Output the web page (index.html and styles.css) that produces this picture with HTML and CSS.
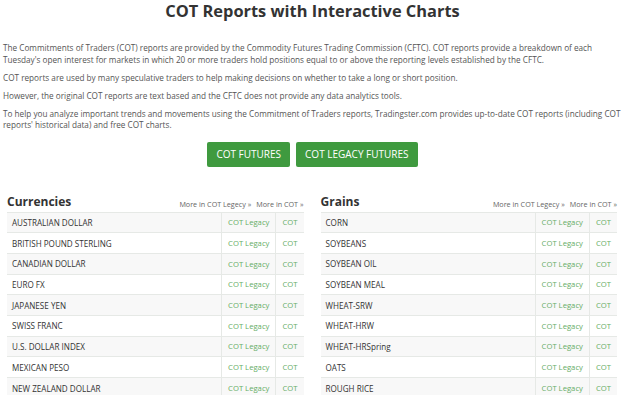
FILE: index.html
```html
<!DOCTYPE html>
<html lang="en">
	<head>
		<meta charset="UTF-8" />
		<meta name="viewport" content="width=device-width, initial-scale=1.0" />
		<title>COT Reports with Interactive Charts</title>
		<link rel="stylesheet" href="styles.css">
	</head>
	<body>
		<h1 class="title">COT Reports with Interactive Charts</h1>

		<div class="intro">
			<p>The Commitments of Traders (COT) reports are provided by the Commodity Futures Trading Commission (CFTC). COT reports provide a breakdown of each Tuesday's open interest for markets in which 20 or more traders hold positions equal to or above the reporting levels established by the CFTC.</p>
			<p>COT reports are used by many speculative traders to help making decisions on whether to take a long or short position.</p>
			<p>However, the original COT reports are text based and the CFTC does not provide any data analytics tools.</p>
			<p>To help you analyze important trends and movements using the Commitment of Traders reports, Tradingster.com provides up-to-date COT reports (including COT reports' historical data) and free COT charts.</p>
		</div>

		<div class="buttons">
			<a class="btn" href="#">COT FUTURES</a>
			<a class="btn" href="#">COT LEGACY FUTURES</a>
		</div>

		<div class="groups">
			<div class="group">
				<div class="group-head">
					<h2>Currencies</h2>
					<div class="more">
						<a href="#">More in COT Legecy &raquo;</a>
						<a href="#">More in COT &raquo;</a>
					</div>
				</div>
				<table class="markets">
					<tr><td>AUSTRALIAN DOLLAR</td><td class="lnk"><a href="#">COT Legacy</a></td><td class="lnk"><a href="#">COT</a></td></tr>
					<tr><td>BRITISH POUND STERLING</td><td class="lnk"><a href="#">COT Legacy</a></td><td class="lnk"><a href="#">COT</a></td></tr>
					<tr><td>CANADIAN DOLLAR</td><td class="lnk"><a href="#">COT Legacy</a></td><td class="lnk"><a href="#">COT</a></td></tr>
					<tr><td>EURO FX</td><td class="lnk"><a href="#">COT Legacy</a></td><td class="lnk"><a href="#">COT</a></td></tr>
					<tr><td>JAPANESE YEN</td><td class="lnk"><a href="#">COT Legacy</a></td><td class="lnk"><a href="#">COT</a></td></tr>
					<tr><td>SWISS FRANC</td><td class="lnk"><a href="#">COT Legacy</a></td><td class="lnk"><a href="#">COT</a></td></tr>
					<tr><td>U.S. DOLLAR INDEX</td><td class="lnk"><a href="#">COT Legacy</a></td><td class="lnk"><a href="#">COT</a></td></tr>
					<tr><td>MEXICAN PESO</td><td class="lnk"><a href="#">COT Legacy</a></td><td class="lnk"><a href="#">COT</a></td></tr>
					<tr><td>NEW ZEALAND DOLLAR</td><td class="lnk"><a href="#">COT Legacy</a></td><td class="lnk"><a href="#">COT</a></td></tr>
				</table>
			</div>

			<div class="group">
				<div class="group-head">
					<h2>Grains</h2>
					<div class="more">
						<a href="#">More in COT Legecy &raquo;</a>
						<a href="#">More in COT &raquo;</a>
					</div>
				</div>
				<table class="markets">
					<tr><td>CORN</td><td class="lnk"><a href="#">COT Legacy</a></td><td class="lnk"><a href="#">COT</a></td></tr>
					<tr><td>SOYBEANS</td><td class="lnk"><a href="#">COT Legacy</a></td><td class="lnk"><a href="#">COT</a></td></tr>
					<tr><td>SOYBEAN OIL</td><td class="lnk"><a href="#">COT Legacy</a></td><td class="lnk"><a href="#">COT</a></td></tr>
					<tr><td>SOYBEAN MEAL</td><td class="lnk"><a href="#">COT Legacy</a></td><td class="lnk"><a href="#">COT</a></td></tr>
					<tr><td>WHEAT-SRW</td><td class="lnk"><a href="#">COT Legacy</a></td><td class="lnk"><a href="#">COT</a></td></tr>
					<tr><td>WHEAT-HRW</td><td class="lnk"><a href="#">COT Legacy</a></td><td class="lnk"><a href="#">COT</a></td></tr>
					<tr><td>WHEAT-HRSpring</td><td class="lnk"><a href="#">COT Legacy</a></td><td class="lnk"><a href="#">COT</a></td></tr>
					<tr><td>OATS</td><td class="lnk"><a href="#">COT Legacy</a></td><td class="lnk"><a href="#">COT</a></td></tr>
					<tr><td>ROUGH RICE</td><td class="lnk"><a href="#">COT Legacy</a></td><td class="lnk"><a href="#">COT</a></td></tr>
				</table>
			</div>
		</div>
	</body>
</html>
```

FILE: styles.css
```css
body {
	margin: 0;
	background: #fff;
	color: #333;
	font-family: "Open Sans", sans-serif;
}

a {
	text-decoration: none;
}

.title {
	margin: 0;
	text-align: center;
	font-size: 16.4px;
	font-weight: 700;
	line-height: 22px;
	color: #333;
}

.intro {
	padding: 20px 3px 0 3px;
	font-size: 8.2px;
	line-height: 11.5px;
	color: #555;
}

.intro p {
	margin: 0 0 6.5px 0;
}

.buttons {
	display: flex;
	justify-content: center;
	gap: 6px;
	margin-top: 11px;
}

.btn {
	display: block;
	background: #3f9a3f;
	color: #fff;
	font-size: 10px;
	line-height: 25px;
	padding: 0 9px;
	border-radius: 2px;
}

.groups {
	display: grid;
	grid-template-columns: 1fr 1fr;
	gap: 17px;
	padding: 25px 8px 0 7px;
}

.group-head {
	display: flex;
	justify-content: space-between;
	align-items: flex-end;
	height: 20px;
}

.group-head h2 {
	margin: 0 0 2px 0;
	font-size: 12px;
	line-height: 17px;
	font-weight: 700;
	color: #333;
}

.more {
	display: flex;
	gap: 5px;
	font-size: 7.2px;
	line-height: 13px;
	margin-bottom: 1px;
}

.more a {
	color: #666;
}

.markets {
	width: 100%;
	border-collapse: collapse;
	font-size: 8.1px;
	color: #333;
}

.markets td {
	height: 20.7px;
	padding: 0 6px 0 5px;
	border-top: 1px solid #e6e9e6;
	box-sizing: border-box;
}

.markets tr:nth-child(odd) td {
	background: #f8f8f8;
}

.markets td.lnk {
	width: 1%;
	white-space: nowrap;
	text-align: center;
	padding: 0 6px;
	border-left: 1px solid #e6e9e6;
	font-size: 7.7px;
}

.markets td.lnk a {
	color: #66ad66;
}
```
